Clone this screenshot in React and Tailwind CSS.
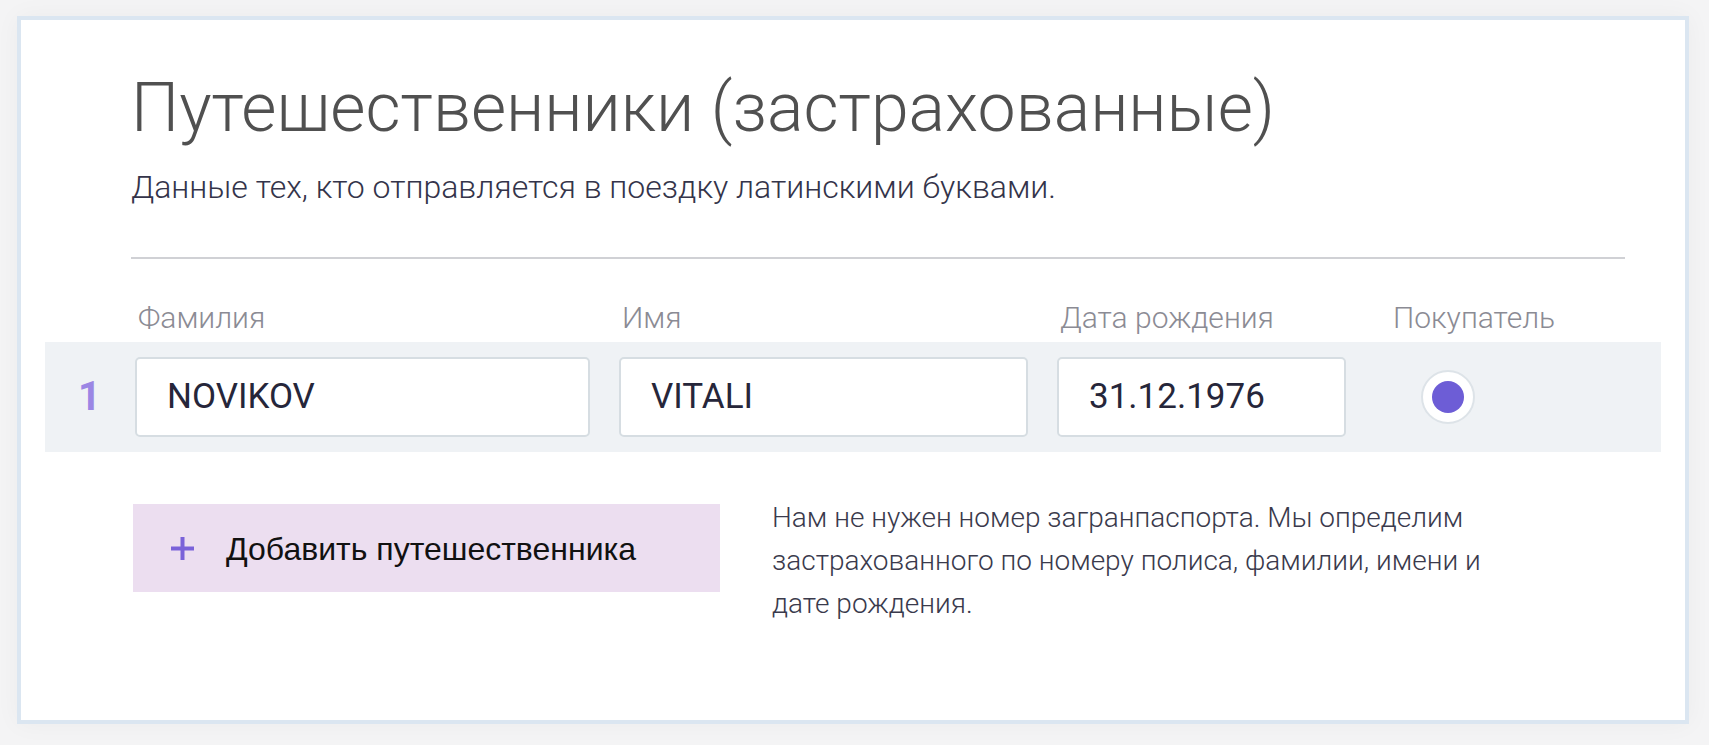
import React from 'react';

const fields = [
    { label: 'Фамилия', value: 'NOVIKOV' },
    { label: 'Имя', value: 'VITALI' },
    { label: 'Дата рождения', value: '31.12.1976' },
];

const App = () => {
    return (
        <div className="min-h-[745px] bg-[#f4f4f5] pt-[16px] pr-[20px] pb-[21px] pl-[17px] font-['Roboto',sans-serif]">
            <div className="h-[708px] border-4 border-[#dbe6f1] bg-white shadow-[0_0_24px_rgba(0,0,0,0.04)] pt-[49px]">
                <div className="pl-[110px] pr-[60px]">
                    <h1 className="text-[68px] leading-[79px] font-light text-[#505050]">
                        Путешественники (застрахованные)
                    </h1>
                    <p className="mt-[20px] text-[32px] leading-[38px] font-light text-[#34344a]">
                        Данные тех, кто отправляется в поездку латинскими буквами.
                    </p>
                    <div className="mt-[51px] h-[2px] bg-[#d0d1d5]" />
                </div>

                <div className="mx-[24px] mt-[43px]">
                    <div className="grid grid-cols-[61px_455px_409px_289px_1fr] gap-x-[29px] pb-[8px]">
                        <div />
                        {fields.map(f => (
                            <div key={f.label} className="pl-[3px] text-[30px] leading-[32px] font-light text-[#8b8b94]">
                                {f.label}
                            </div>
                        ))}
                        <div className="pl-[18px] text-[30px] leading-[32px] font-light text-[#8b8b94]">Покупатель</div>
                    </div>

                    <div className="grid grid-cols-[61px_455px_409px_289px_1fr] gap-x-[29px] items-center bg-[#eff2f5] py-[15px]">
                        <div className="pl-[33px] text-[40px] leading-none font-bold text-[#9b86e4]">1</div>
                        {fields.map(f => (
                            <div key={f.value} className="h-[80px] flex items-center rounded-[5px] border-2 border-[#d6dde2] bg-white pl-[30px] text-[35px] text-[#26263a]">
                                {f.value}
                            </div>
                        ))}
                        <div className="pl-[46px]">
                            <div className="w-[54px] h-[54px] rounded-full border-2 border-[#dde3e8] bg-white flex items-center justify-center">
                                <div className="w-[32px] h-[32px] rounded-full bg-[#6d5dd6]" />
                            </div>
                        </div>
                    </div>
                </div>

                <div className="flex items-start mt-[52px] pl-[112px]">
                    <button className="w-[587px] h-[88px] flex items-center bg-[#ecdef0] pl-[38px]">
                        <svg width="23" height="23" viewBox="0 0 23 23" className="shrink-0">
                            <rect x="0" y="9.5" width="23" height="4" fill="#7a62d9" />
                            <rect x="9.5" y="0" width="4" height="23" fill="#7a62d9" />
                        </svg>
                        <span className="ml-[32px] mt-[2px] font-['Liberation_Sans',Arial,sans-serif] text-[32px] text-[#111]">
                            Добавить путешественника
                        </span>
                    </button>
                    <p className="ml-[52px] -mt-[8px] w-[720px] text-[28px] leading-[43px] font-light text-[#3a3a4c]">
                        Нам не нужен номер загранпаспорта. Мы определим застрахованного по номеру полиса, фамилии, имени и дате рождения.
                    </p>
                </div>
            </div>
        </div>
    );
};

export default App;
